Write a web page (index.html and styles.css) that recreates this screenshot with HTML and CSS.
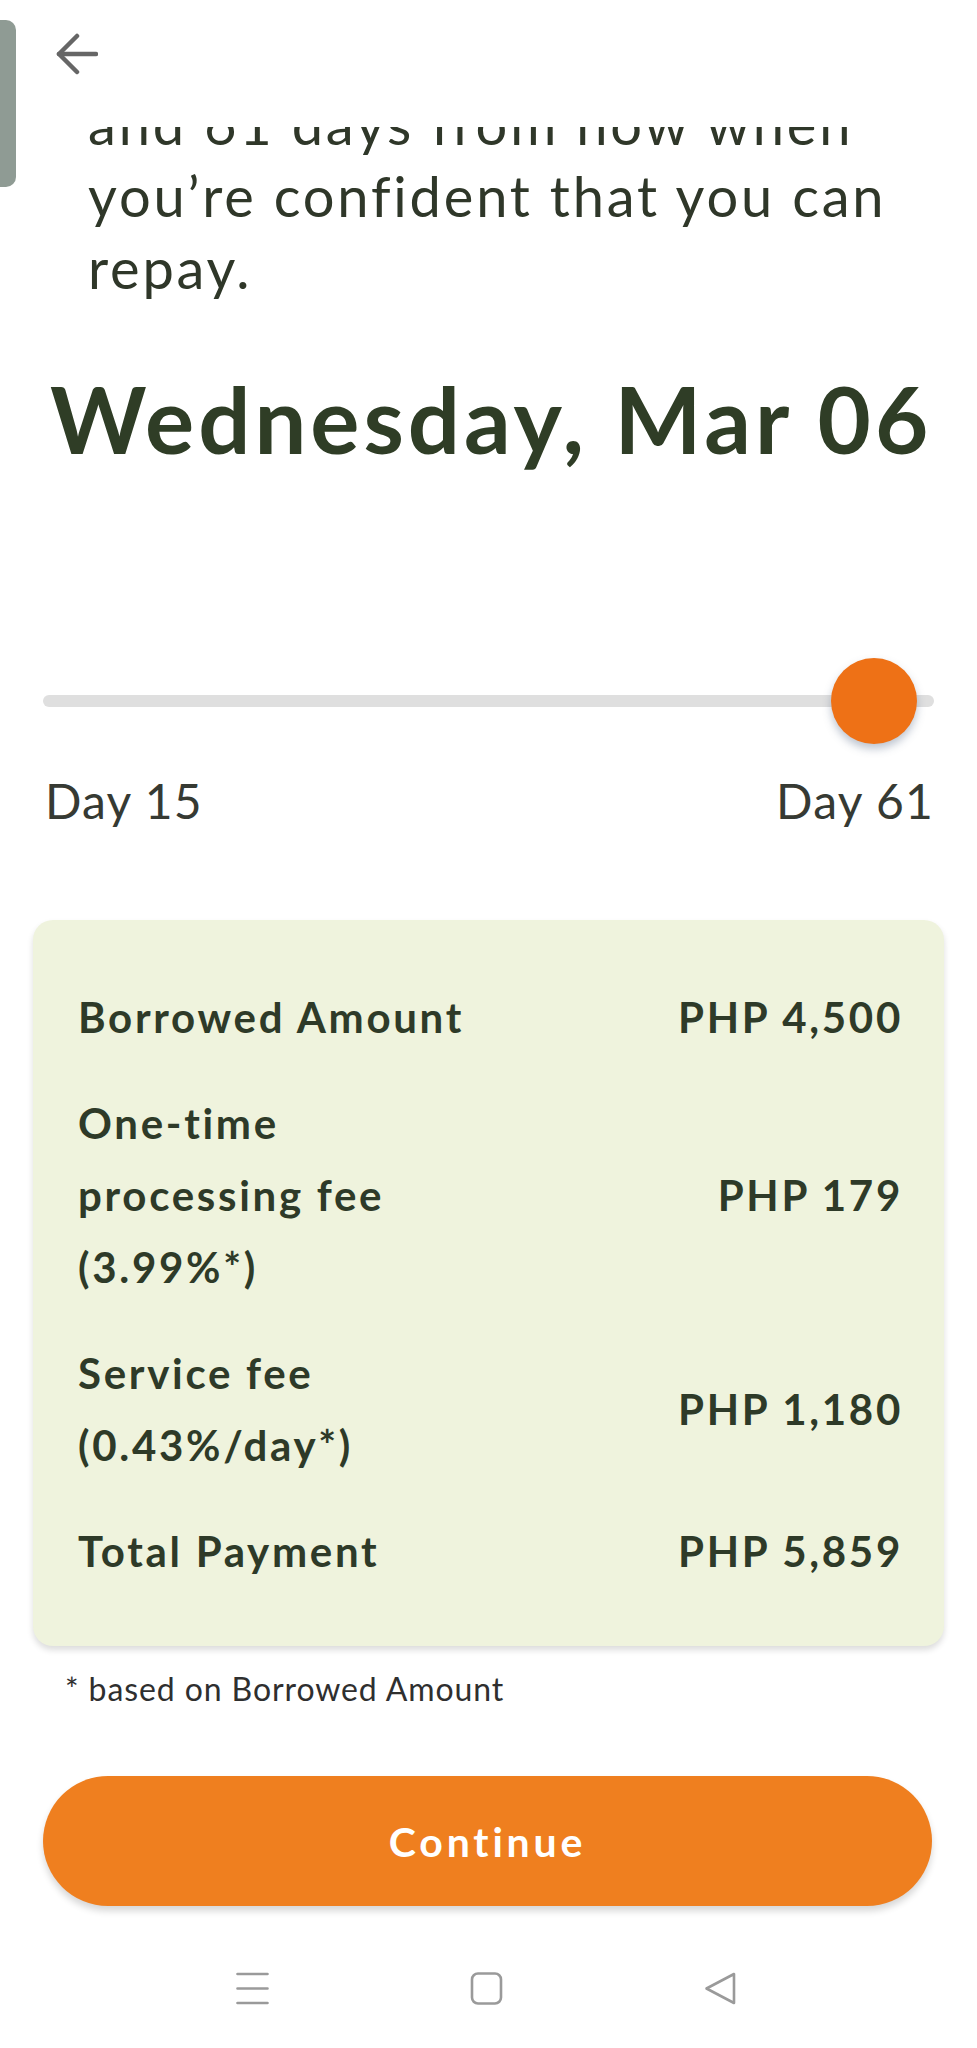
FILE: index.html
```html
<!DOCTYPE html>
<html lang="en">
<head>
<meta charset="utf-8">
<title>Choose repayment date</title>
<link rel="stylesheet" href="styles.css">
</head>
<body>
<div class="screen">
  <div class="side-tab"></div>
  <header class="topbar">
    <button class="back" aria-label="Back">
      <svg width="43" height="42" viewBox="0 0 43 42" fill="none" stroke="#666" stroke-width="4.5" stroke-linecap="round" stroke-linejoin="round">
        <path d="M41 21H4"/>
        <path d="M22 3L4 21L22 39"/>
      </svg>
    </button>
  </header>

  <main class="scroll">
    <div class="scroll-inner">
      <p class="intro">Choose a repayment date between 15 days<br>and 61 days from now when<br>you’re confident that you can<br>repay.</p>

      <h1 class="date">Wednesday, Mar 06</h1>

      <div class="slider">
        <div class="track"></div>
        <div class="thumb"></div>
      </div>
      <div class="range-labels">
        <span>Day 15</span>
        <span>Day 61</span>
      </div>

      <section class="summary">
        <div class="row">
          <div class="label">Borrowed Amount</div>
          <div class="value">PHP 4,500</div>
        </div>
        <div class="row">
          <div class="label">One-time<br>processing fee<br>(3.99%*)</div>
          <div class="value">PHP 179</div>
        </div>
        <div class="row">
          <div class="label">Service fee<br>(0.43%/day*)</div>
          <div class="value">PHP 1,180</div>
        </div>
        <div class="row">
          <div class="label">Total Payment</div>
          <div class="value">PHP 5,859</div>
        </div>
      </section>

      <p class="footnote">* based on Borrowed Amount</p>

      <button class="continue">Continue</button>
    </div>
  </main>

  <nav class="sysnav">
    <svg class="nav-icon" width="33" height="33" viewBox="0 0 33 33" stroke="#9a9a9a" stroke-width="2.6" stroke-linecap="round">
      <path d="M1.5 2H31.5M1.5 16.5H31.5M1.5 31H31.5"/>
    </svg>
    <svg class="nav-icon" width="33" height="33" viewBox="0 0 33 33" fill="none" stroke="#9a9a9a" stroke-width="2.6">
      <rect x="2" y="1.5" width="29" height="30" rx="6"/>
    </svg>
    <svg class="nav-icon" width="33" height="33" viewBox="0 0 33 33" fill="none" stroke="#9a9a9a" stroke-width="2.6" stroke-linejoin="round">
      <path d="M30 2V31L2.5 16.5Z"/>
    </svg>
  </nav>
</div>
</body>
</html>
```
FILE: styles.css
```css
* { box-sizing: border-box; }

html, body {
  margin: 0;
  padding: 0;
  background: #ffffff;
}

body {
  font-family: Lato, "Noto Sans", sans-serif;
  color: #2e3a28;
}

.screen {
  position: relative;
  width: 977px;
  height: 2048px;
  display: flex;
  flex-direction: column;
  overflow: hidden;
  background: #ffffff;
}

.side-tab {
  position: absolute;
  left: 0;
  top: 20px;
  width: 16px;
  height: 167px;
  background: #8f9b94;
  border-radius: 0 10px 10px 0;
}

.topbar {
  height: 127px;
  flex: 0 0 127px;
  padding: 33px 0 0 55px;
  background: #ffffff;
}

.back {
  display: block;
  padding: 0;
  margin: 0;
  border: 0;
  background: none;
  width: 43px;
  height: 42px;
}

.back svg { display: block; }

.scroll {
  flex: 0 0 auto;
  height: 1801px;
  overflow: hidden;
}

.scroll-inner {
  margin-top: -111px;
  display: flex;
  flex-direction: column;
}

.intro {
  margin: 0;
  padding-left: 88px;
  font-size: 56px;
  line-height: 72px;
  letter-spacing: 2.8px;
  color: #2f3729;
  white-space: nowrap;
}

.date {
  margin: 60px 0 0 50px;
  font-size: 92px;
  line-height: 110px;
  font-weight: 700;
  color: #2f3d26;
  letter-spacing: 4px;
}

.slider {
  position: relative;
  margin: 184px 43px 0 43px;
  height: 85px;
  display: flex;
  align-items: center;
}

.track {
  flex: 1;
  height: 12px;
  border-radius: 6px;
  background: #dfdfdf;
}

.thumb {
  position: absolute;
  right: 17px;
  top: 0;
  width: 86px;
  height: 86px;
  border-radius: 50%;
  background: #ee7116;
  box-shadow: 0 5px 8px rgba(70, 90, 120, 0.35);
}

.range-labels {
  margin: 29px 43px 0 45px;
  display: flex;
  justify-content: space-between;
  font-size: 48px;
  line-height: 58px;
  letter-spacing: 1.2px;
  color: #363a33;
}

.summary {
  margin: 90px 33px 0 33px;
  padding: 61px 43px 59px 45px;
  background: #eff3dd;
  border-radius: 20px;
  box-shadow: 0 4px 6px rgba(0, 0, 0, 0.14);
  display: flex;
  flex-direction: column;
  gap: 34px;
}

.row {
  display: flex;
  align-items: center;
  justify-content: space-between;
  font-size: 42px;
  line-height: 72px;
  font-weight: 700;
  color: #2e3a28;
  letter-spacing: 2.7px;
}

.value { text-align: right; margin-right: -2px; }

.footnote {
  margin: 24px 0 0 65px;
  font-size: 32px;
  line-height: 38px;
  color: #2f2f2f;
  letter-spacing: 0.9px;
}

.continue {
  margin: 68px 45px 0 43px;
  height: 130px;
  border: 0;
  border-radius: 65px;
  background: #ef7f1f;
  color: #ffffff;
  font-family: Lato, "Noto Sans", sans-serif;
  font-size: 41px;
  font-weight: 700;
  letter-spacing: 3.8px;
  box-shadow: 0 5px 7px rgba(0, 0, 0, 0.16);
}

.sysnav {
  flex: 1;
  display: flex;
  align-items: center;
  padding-left: 236px;
  gap: 201px;
}

.nav-icon { display: block; flex: 0 0 auto; }
```
